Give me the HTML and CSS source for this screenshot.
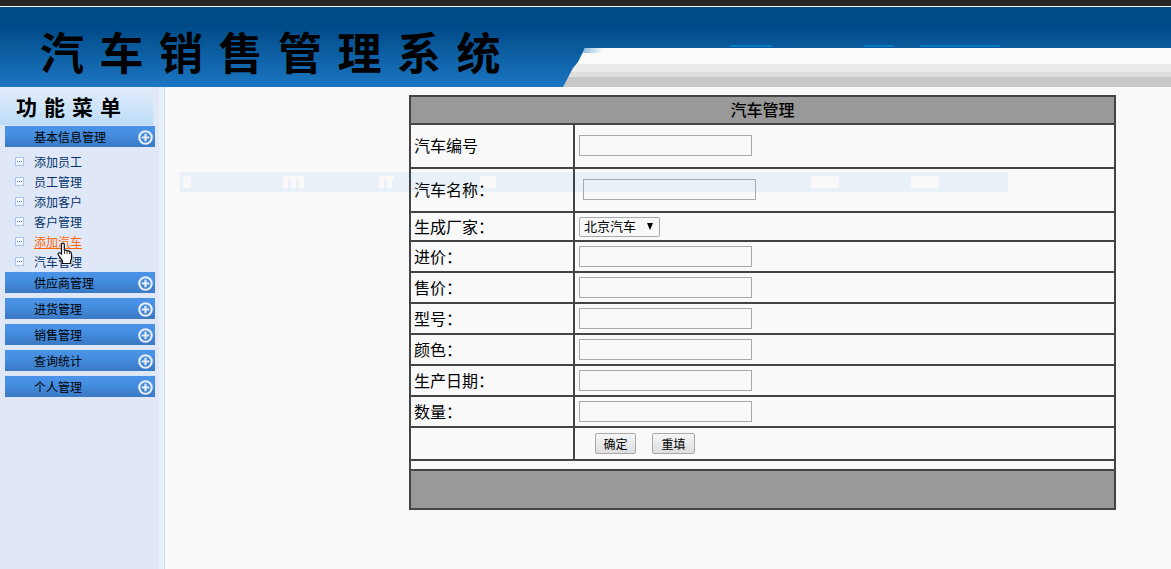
FILE: index.html
```html
<!DOCTYPE html>
<html lang="zh">
<head>
<meta charset="utf-8">
<title>汽车销售管理系统</title>
<link rel="stylesheet" href="styles.css">
</head>
<body>
<div class="topbar"></div>
<header class="banner">
  <h1 class="brand">汽车销售管理系统</h1>
  <div class="swoosh"></div>
</header>
<div class="layout">
  <aside class="sidebar">
    <div class="menu-title">功能菜单</div>
    <nav class="menu">
      <div class="menu-head"><span>基本信息管理</span><svg class="plus" viewBox="0 0 14 14"><circle cx="7" cy="7" r="5.8"/><path d="M7 3.5v7M3.5 7h7"/></svg></div>
      <ul class="menu-list">
        <li><i class="dot"></i><a href="#">添加员工</a></li>
        <li><i class="dot"></i><a href="#">员工管理</a></li>
        <li><i class="dot"></i><a href="#">添加客户</a></li>
        <li><i class="dot"></i><a href="#">客户管理</a></li>
        <li><i class="dot"></i><a href="#" class="hover">添加汽车</a>
          <svg class="cursor" viewBox="0 0 17 23"><path class="shade" d="M4 15l4 7h8v-9z"/><path d="M5 1.5c1-.8 2.3-.2 2.300 1V8l5 1.200c1.500.4 2.200 1.200 2.200 2.800v4c0 1.200-.5 2-1 3v2.500H5.500V19L1.500 13c-.8-1-.5-2 .5-2.200.8-.2 1.500.2 2.500 1.200V3c0-.6.1-1.100.5-1.500z"/><path class="fold" d="M7.500 8v4M10 8.500V12M12.500 9.500V12"/></svg></li>
        <li><i class="dot"></i><a href="#">汽车管理</a></li>
      </ul>
      <div class="menu-head"><span>供应商管理</span><svg class="plus" viewBox="0 0 14 14"><circle cx="7" cy="7" r="5.8"/><path d="M7 3.5v7M3.5 7h7"/></svg></div>
      <div class="menu-head"><span>进货管理</span><svg class="plus" viewBox="0 0 14 14"><circle cx="7" cy="7" r="5.8"/><path d="M7 3.5v7M3.5 7h7"/></svg></div>
      <div class="menu-head"><span>销售管理</span><svg class="plus" viewBox="0 0 14 14"><circle cx="7" cy="7" r="5.8"/><path d="M7 3.5v7M3.5 7h7"/></svg></div>
      <div class="menu-head"><span>查询统计</span><svg class="plus" viewBox="0 0 14 14"><circle cx="7" cy="7" r="5.8"/><path d="M7 3.5v7M3.5 7h7"/></svg></div>
      <div class="menu-head"><span>个人管理</span><svg class="plus" viewBox="0 0 14 14"><circle cx="7" cy="7" r="5.8"/><path d="M7 3.5v7M3.5 7h7"/></svg></div>
    </nav>
  </aside>
  <main class="content">
    <div class="ghost"><i class="g1"></i><i class="g2"></i><i class="g3"></i><i class="g4"></i><i class="g5"></i><i class="g6"></i></div>
    <form>
    <table class="form-table">
      <colgroup><col class="col-label"><col></colgroup>
      <tr class="r-head"><th colspan="2">汽车管理</th></tr>
      <tr class="r-tall"><td>汽车编号</td><td><input class="field" type="text"></td></tr>
      <tr class="r-tall"><td>汽车名称：</td><td><input class="field indent" type="text"></td></tr>
      <tr class="r-sel"><td>生成厂家：</td><td><span class="pick-wrap"><select class="pick"><option>北京汽车</option></select></span></td></tr>
      <tr class="r"><td>进价：</td><td><input class="field" type="text"></td></tr>
      <tr class="r"><td>售价：</td><td><input class="field" type="text"></td></tr>
      <tr class="r"><td>型号：</td><td><input class="field" type="text"></td></tr>
      <tr class="r"><td>颜色：</td><td><input class="field" type="text"></td></tr>
      <tr class="r"><td>生产日期：</td><td><input class="field" type="text"></td></tr>
      <tr class="r"><td>数量：</td><td><input class="field" type="text"></td></tr>
      <tr class="r-btn"><td></td><td><div class="actions"><button type="button" class="btn">确定</button><button type="button" class="btn">重填</button></div></td></tr>
      <tr class="r-gap"><td colspan="2"></td></tr>
      <tr class="r-foot"><td colspan="2"></td></tr>
    </table>
    </form>
  </main>
</div>
</body>
</html>
```
FILE: styles.css
```css
* { box-sizing: border-box; }
html, body { margin: 0; height: 100%; }
body {
  width: 1171px; height: 569px; overflow: hidden;
  background: #f9f9f9;
  font-family: "Liberation Sans", "Noto Sans CJK SC", sans-serif;
  color: #000;
}
.topbar { height: 7px; background: #262626; border-bottom: 1px solid #f4f4f4; }
.banner {
  height: 80px; display: flex;
  background:
    linear-gradient(#0678c2, #0678c2) 730px 38px / 42px 2px no-repeat,
    linear-gradient(#0678c2, #0678c2) 864px 38px / 30px 2px no-repeat,
    linear-gradient(#0678c2, #0678c2) 920px 38px / 80px 2px no-repeat,
    linear-gradient(#004a88 0, #004a88 24%, #0a5a9c 50%, #1b76c2 100%);
}
.brand {
  width: 563px; flex: none; margin: 0; padding: 14px 0 0 40px;
  font: 700 44px/60px "Noto Sans CJK SC", sans-serif;
  letter-spacing: 15.5px; white-space: nowrap; color: #000;
}
.swoosh {
  flex: 1; margin-top: 41px;
  background:
    linear-gradient(90deg, #8fbbdf, #fbfbfb) 20px 0 / 20px 5px no-repeat,
    linear-gradient(#fbfbfb 0, #fbfbfb 16px, #ebebeb 16px, #ebebeb 24px, #dedede 24px, #dedede 29px, #c8c8c8 29px);
  clip-path: polygon(22px 0, 100% 0, 100% 100%, 0 100%, 10px 20px, 15px 14px);
}
.layout { display: flex; height: 482px; }
.sidebar {
  width: 165px; flex: none;
  background: linear-gradient(90deg, #e0e7f6 0, #e0e7f6 159px, #e9f0fb 159px, #e9f0fb 164px, #cfe0f5 164px);
}
.menu-title {
  height: 38px; width: 153px;
  background: linear-gradient(#e4edfb 0, #bcdcf8 100%);
  font: 700 21px/38px "Noto Sans CJK SC", sans-serif;
  letter-spacing: 7px; padding-left: 16px; color: #000; white-space: nowrap;
}
.menu { padding: 0 10px 0 5px; }
.menu-head {
  height: 22px; margin-bottom: 4px;
  display: flex; align-items: center; justify-content: space-between;
  padding: 0 2px 0 29px;
  background: linear-gradient(#4a93e8 0, #458ee0 40%, #3a78c4 100%);
  border-top: 1px solid #d6e6fa;
  font-size: 12px; color: #000;
}
.plus { width: 15px; height: 15px; margin-top: 2px; fill: none; stroke: #e8eef8; stroke-width: 2; }
.menu-list { list-style: none; margin: 0; padding: 0 0 0 10px; }
.menu-list li { position: relative; height: 20px; display: flex; align-items: center; font-size: 12px; }
.dot {
  width: 9px; height: 9px; margin-right: 10px; flex: none;
  border: 1px solid #a8c6ee; background: #f4f7fd;
  background-image: linear-gradient(90deg, #3a78c4 1px, transparent 1px);
  background-size: 2px 1px; background-position: 1px 3px; background-repeat: repeat-x;
  background-clip: content-box;
}
.menu-list a { color: #00336a; text-decoration: none; }
.menu-list a.hover { color: #ff6600; text-decoration: underline; }
.cursor { position: absolute; left: 42px; top: 11px; width: 17px; height: 23px; fill: #fff; stroke: #111; stroke-width: 1.2; z-index: 2; }
.cursor .fold { fill: none; stroke-width: .8; }
.cursor .shade { fill: #bbb; stroke: none; }
.content { flex: 1; position: relative; padding: 8px 0 0 244px; }
.ghost { position: absolute; left: 15px; top: 85px; width: 828px; height: 20px; background: #e8f0f8; }
.ghost i { position: absolute; top: 4px; height: 12px; background: #f9f9f9; }
.g1 { left: 3px; width: 8px; }
.g2, .g3 {
  background:
    linear-gradient(#f9f9f9, #f9f9f9) 0 0 / 100% 4px no-repeat,
    repeating-linear-gradient(90deg, #f9f9f9 0 5px, #e8f0f8 5px 8px) !important;
}
.g2 { left: 103px; width: 21px; }
.g3 { left: 199px; width: 15px; }
.g4 { left: 300px; width: 16px; }
.g5 { left: 631px; width: 28px; }
.g6 { left: 731px; width: 28px; }
.form-table {
  position: relative; width: 707px; table-layout: fixed; border-collapse: collapse;
  border: 2px solid #444; font-size: 16px;
}
.form-table td, .form-table th { border: 2px solid #444; padding: 0 3px; }
.form-table td:first-child { padding-bottom: 2px; }
.col-label { width: 164px; }
.form-table th { background: #999; font-size: 16px; font-weight: 500; height: 28px; padding-bottom: 2px; }
.r-tall td { height: 44px; padding-bottom: 2px; }
.r-sel td { height: 29px; }
.r td { height: 31px; }
.r-btn td { height: 33px; }
.r-gap td { height: 10px; }
.r-foot td { height: 39px; background: #999; }
.field { display: block; width: 173px; height: 21px; margin: 0 0 0 1px; padding: 1px 2px; border: 1px solid #a9a9a9; background: transparent; }
.indent { margin-left: 5px; }
.pick-wrap { display: block; position: relative; width: 81px; margin-left: 1px; }
.pick-wrap::after {
  content: ""; position: absolute; right: 7px; top: 6px;
  border: 3.5px solid transparent; border-top: 7px solid #000; border-bottom: 0;
}
.pick {
  display: block; width: 81px; height: 20px; appearance: none; -webkit-appearance: none;
  font: 13px "Liberation Sans", "Noto Sans CJK SC", sans-serif;
  background: #f9f9f9; border: 1px solid #a9a9a9; border-radius: 2px; padding: 0 0 0 4px; color: #000;
}
.actions { display: flex; gap: 16px; padding-left: 17px; }
.btn {
  height: 21px; width: 41px; padding: 0; font: 12px "Liberation Sans", "Noto Sans CJK SC", sans-serif;
  background: linear-gradient(#f6f6f6, #dedede); border: 1px solid #a9a9a9; border-radius: 2px; color: #000;
}
.btn + .btn { width: 43px; }
```
